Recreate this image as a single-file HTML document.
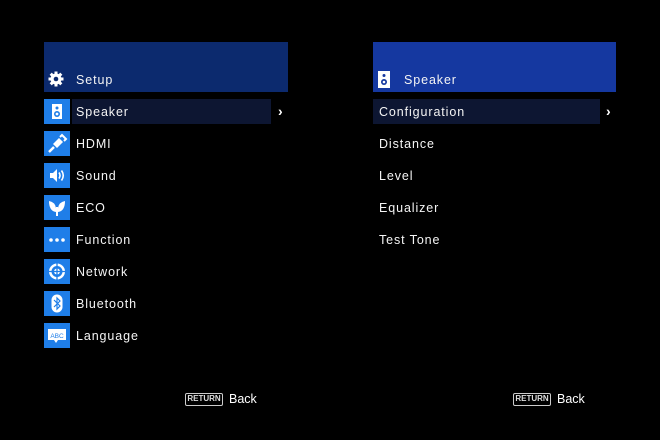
<!DOCTYPE html>
<html><head><meta charset="utf-8"><style>
*{margin:0;padding:0;box-sizing:border-box}
body{width:660px;height:440px;background:#000;position:relative;overflow:hidden;font-family:"Liberation Sans",sans-serif;color:#fff}
.a{position:absolute}
.t{position:absolute;font-size:12.5px;font-weight:normal;letter-spacing:0.9px;line-height:14px;color:#f4f4f4}
.ch{position:absolute;font-size:14px;font-weight:bold;line-height:14px}
.ic{position:absolute;left:44px;width:26px;height:25px;background:#1f7ee8}
.ic svg{width:26px;height:25px;display:block}
</style></head><body>
<div class="a" style="left:44px;top:42px;width:244px;height:50px;background:#0c2a6e"></div>
<svg class="a" style="left:48px;top:71px" width="16" height="16" viewBox="0 0 16 16"><g fill="#fff"><circle cx="8" cy="8" r="5.5"/><rect x="6.5" y="0.5" width="3" height="15"/><rect x="0.5" y="6.5" width="15" height="3"/><rect x="6.5" y="0.5" width="3" height="15" transform="rotate(45 8 8)"/><rect x="6.5" y="0.5" width="3" height="15" transform="rotate(-45 8 8)"/></g><circle cx="8" cy="8" r="2.3" fill="#0c2a6e"/></svg>
<div class="t" style="left:76px;top:73px">Setup</div>

<div class="a" style="left:72px;top:99px;width:199px;height:25px;background:#0d1632"></div>
<div class="ch" style="left:278px;top:104px">›</div>

<div class="ic" style="top:99px"><svg viewBox="0 0 26 25"><rect x="8" y="5" width="10" height="15" fill="#fff"/><circle cx="13" cy="9" r="1.5" fill="#1f7ee8"/><circle cx="13" cy="15" r="3" fill="#1f7ee8"/><circle cx="13" cy="15" r="1.4" fill="#fff"/></svg></div>
<div class="t" style="left:76px;top:105px">Speaker</div>

<div class="ic" style="top:131px"><svg viewBox="0 0 26 25"><path d="M5 21 L10 16" stroke="#fff" stroke-width="2.5"/><path d="M9 13 L15 7 L19 11 L13 17 Z" fill="#fff"/><path d="M16 6 L18 4 L22 8 L20 10" stroke="#fff" stroke-width="2" fill="none"/></svg></div>
<div class="t" style="left:76px;top:137px">HDMI</div>

<div class="ic" style="top:163px"><svg viewBox="0 0 26 25"><path d="M6 10h3l4-4v13l-4-4H6z" fill="#fff"/><path d="M15 9.5q2 3 0 6M17.5 7.5q3.5 5 0 10" stroke="#fff" stroke-width="1.6" fill="none"/></svg></div>
<div class="t" style="left:76px;top:169px">Sound</div>

<div class="ic" style="top:195px"><svg viewBox="0 0 26 25"><path d="M12 17 Q5 16 5 6 Q11 7 12 13Z M14 17 Q21 16 21 6 Q15 7 14 13Z" fill="#fff"/><rect x="12" y="12" width="2" height="9" fill="#fff"/></svg></div>
<div class="t" style="left:76px;top:201px">ECO</div>

<div class="ic" style="top:227px"><svg viewBox="0 0 26 25"><circle cx="7" cy="13" r="1.8" fill="#fff"/><circle cx="13" cy="13" r="1.8" fill="#fff"/><circle cx="19" cy="13" r="1.8" fill="#fff"/></svg></div>
<div class="t" style="left:76px;top:233px">Function</div>

<div class="ic" style="top:259px"><svg viewBox="0 0 26 25"><circle cx="13" cy="12.5" r="8" fill="#fff"/><circle cx="13" cy="12.5" r="5.5" fill="#1f7ee8"/><circle cx="13" cy="12.5" r="3" fill="#fff"/><path d="M13 4v17M4.5 12.5h17" stroke="#1f7ee8" stroke-width="1.3"/></svg></div>
<div class="t" style="left:76px;top:265px">Network</div>

<div class="ic" style="top:291px"><svg viewBox="0 0 26 25"><rect x="7.5" y="3.5" width="11" height="18" rx="5.5" fill="#fff"/><path d="M10 9l6 6-3 3V7l3 3-6 6" stroke="#1f7ee8" stroke-width="1.2" fill="none"/></svg></div>
<div class="t" style="left:76px;top:297px">Bluetooth</div>

<div class="ic" style="top:323px"><svg viewBox="0 0 26 25"><path d="M4 6h18v11h-8l-2 3-2-3H4z" fill="#fff"/><text x="13" y="15" font-size="6.5" font-family="Liberation Sans" text-anchor="middle" fill="#1f7ee8">ABC</text></svg></div>
<div class="t" style="left:76px;top:329px">Language</div>

<div class="a" style="left:185px;top:393px;width:38px;height:13px;border:1.3px solid #ccc;border-radius:2px;font-size:8px;line-height:10px;text-align:center;font-weight:bold;color:#ddd">RETURN</div>
<div class="a" style="left:229px;top:392px;font-size:12.5px">Back</div>

<div class="a" style="left:373px;top:42px;width:243px;height:50px;background:#1538a0"></div>
<svg class="a" style="left:378px;top:71px" width="12" height="17" viewBox="0 0 12 17"><rect width="12" height="17" fill="#fff"/><circle cx="6" cy="4.5" r="1.5" fill="#1538a0"/><circle cx="6" cy="11" r="3" fill="#1538a0"/><circle cx="6" cy="11" r="1.3" fill="#fff"/></svg>
<div class="t" style="left:404px;top:73px">Speaker</div>

<div class="a" style="left:373px;top:99px;width:227px;height:25px;background:#0d1632"></div>
<div class="ch" style="left:606px;top:104px">›</div>
<div class="t" style="left:379px;top:105px">Configuration</div>
<div class="t" style="left:379px;top:137px">Distance</div>
<div class="t" style="left:379px;top:169px">Level</div>
<div class="t" style="left:379px;top:201px">Equalizer</div>
<div class="t" style="left:379px;top:233px">Test Tone</div>

<div class="a" style="left:513px;top:393px;width:38px;height:13px;border:1.3px solid #ccc;border-radius:2px;font-size:8px;line-height:10px;text-align:center;font-weight:bold;color:#ddd">RETURN</div>
<div class="a" style="left:557px;top:392px;font-size:12.5px">Back</div>
</body></html>
